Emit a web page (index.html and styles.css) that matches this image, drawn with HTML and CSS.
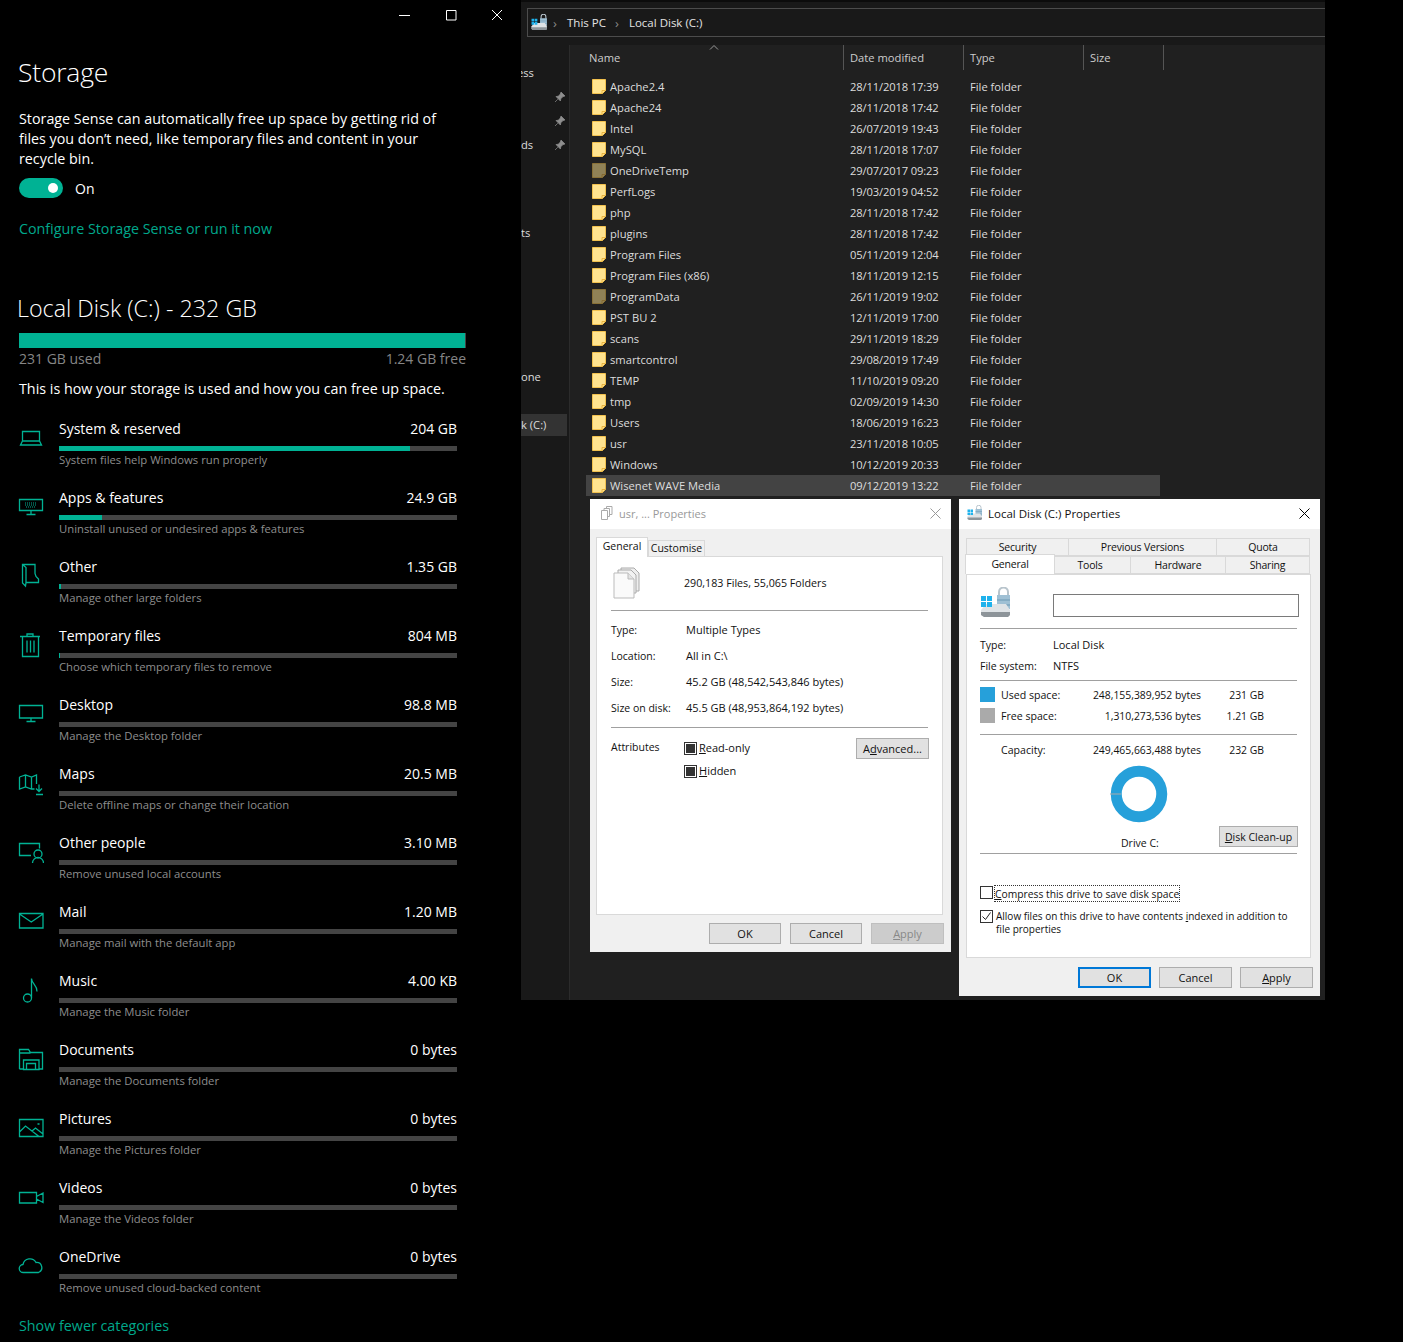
FILE: index.html
```html
<!DOCTYPE html>
<html lang="en">
<head>
<meta charset="utf-8">
<title>Storage</title>
<link rel="stylesheet" href="styles.css">
</head>
<body>
<svg class="defs" width="0" height="0">
  <symbol id="folder" viewBox="0 0 14 15"><path d="M.5.5h13v11l-3 3H.5z" fill="#ffe38f" stroke="#f2c14e"/><path d="M10 14.500v-3h3.500" fill="none" stroke="#e8b23e"/></symbol>
  <symbol id="drive" viewBox="0 0 32 32">
    <path d="M19 9V5a4.500 4.500 0 0 1 9 0v4" fill="none" stroke="#b8c4cc" stroke-width="2"/>
    <path d="M17 8h13v14H17z" fill="#9fc0d4"/>
    <path d="M17 13h13M17 18h13" stroke="#6d98b2"/>
    <path d="M1 23l5-6h20l4 6v5l-2 2H4l-3-2z" fill="#dfe3e6"/>
    <path d="M1 25h29v3l-2 2H4l-3-2z" fill="#8d9499"/>
    <path d="M1 9h5v5H1zM7 9h5v5H7zM1 15h5v5H1zM7 15h5v5H7z" fill="#1fb2ec"/>
  </symbol>
  <symbol id="pin" viewBox="0 0 12 12"><path d="M7 1l4 4-2 .6-2.200 2.200L6.400 10 2 5.600l2.200-.4L6.400 3zM3.800 8.200L1 11" fill="#8f8f8f" stroke="#8f8f8f" stroke-width=".7"/></symbol>
</svg>

<div class="desk">
  <main class="settings">
    <div class="caption">
      <svg class="cap-ico" width="46" height="30" viewBox="0 0 46 30"><path d="M17 15.500h11" stroke="#fff"/></svg>
      <svg class="cap-ico" width="46" height="30" viewBox="0 0 46 30"><path d="M18.500 10.500h9.500v9.500h-9.500z" fill="none" stroke="#fff"/></svg>
      <svg class="cap-ico" width="46" height="30" viewBox="0 0 46 30"><path d="M18 10l10 10M28 10L18 20" stroke="#fff" fill="none"/></svg>
    </div>
    <h1 class="page-title">Storage</h1>
    <p class="intro">Storage Sense can automatically free up space by getting rid of files you don’t need, like temporary files and content in your recycle bin.</p>
    <div class="toggle-row"><span class="toggle"><span class="knob"></span></span><span>On</span></div>
    <a class="link config">Configure Storage Sense or run it now</a>
    <h2 class="disk-title">Local Disk (C:) - 232 GB</h2>
    <div class="disk-bar"><div class="disk-fill"></div></div>
    <div class="disk-meta"><span>231 GB used</span><span>1.24 GB free</span></div>
    <p class="how">This is how your storage is used and how you can free up space.</p>

    <section class="cats">
      <div class="cat">
        <svg class="cat-ico" viewBox="0 0 26 26"><path d="M4.500 6.500h17V16h-17zM2.500 20l2-4h17l2 4z"/></svg>
        <div class="cat-body"><div class="cat-head"><span>System &amp; reserved</span><span>204 GB</span></div><div class="track"><div class="fill" style="width:351px"></div></div><div class="cat-sub">System files help Windows run properly</div></div>
      </div>
      <div class="cat">
        <svg class="cat-ico" viewBox="0 0 26 26"><path d="M1.500 5.500h23v11h-23zM13 16.500v3.500M8.500 20.500h9"/><path class="thin" d="M7 9h12M7 11h12M8 13h10" stroke-dasharray="1 1"/></svg>
        <div class="cat-body"><div class="cat-head"><span>Apps &amp; features</span><span>24.9 GB</span></div><div class="track"><div class="fill" style="width:43px"></div></div><div class="cat-sub">Uninstall unused or undesired apps &amp; features</div></div>
      </div>
      <div class="cat">
        <svg class="cat-ico" viewBox="0 0 26 26"><path d="M4.500 1.500h12.500v9l1 3 2.500 2.500v3.500H8l-.5 3.500-3-3zM4.500 1.500l3.500 3v15"/></svg>
        <div class="cat-body"><div class="cat-head"><span>Other</span><span>1.35 GB</span></div><div class="track"><div class="fill" style="width:2px"></div></div><div class="cat-sub">Manage other large folders</div></div>
      </div>
      <div class="cat">
        <svg class="cat-ico" viewBox="0 0 26 26"><path d="M2 4.500h20M9 4.500V2h6v2.500M4.500 5v19.500h16V5M9 8.500v12M12.500 8.500v12M16 8.500v12"/></svg>
        <div class="cat-body"><div class="cat-head"><span>Temporary files</span><span>804 MB</span></div><div class="track"><div class="fill" style="width:1px"></div></div><div class="cat-sub">Choose which temporary files to remove</div></div>
      </div>
      <div class="cat">
        <svg class="cat-ico" viewBox="0 0 26 26"><path d="M1.500 4.500h23v12.500h-23zM13 17v3M8.500 20.500h9"/></svg>
        <div class="cat-body"><div class="cat-head"><span>Desktop</span><span>98.8 MB</span></div><div class="track"></div><div class="cat-sub">Manage the Desktop folder</div></div>
      </div>
      <div class="cat">
        <svg class="cat-ico" viewBox="0 0 26 26"><path d="M1.500 7l6-2 6 2 5-2v9M1.500 7v12l6-2 6 2h3M7.500 5v12M13.500 7v12M21 14.500v7M18 18.500l3 3 3-3M18 24.500h7"/></svg>
        <div class="cat-body"><div class="cat-head"><span>Maps</span><span>20.5 MB</span></div><div class="track"></div><div class="cat-sub">Delete offline maps or change their location</div></div>
      </div>
      <div class="cat">
        <svg class="cat-ico" viewBox="0 0 26 26"><path d="M13 16.500H1.500v-12h20v5M16 15a4 4 0 1 0 8 0 4 4 0 0 0-8 0zM14.500 24a5.500 5.500 0 0 1 11 0"/></svg>
        <div class="cat-body"><div class="cat-head"><span>Other people</span><span>3.10 MB</span></div><div class="track"></div><div class="cat-sub">Remove unused local accounts</div></div>
      </div>
      <div class="cat">
        <svg class="cat-ico" viewBox="0 0 26 26"><path d="M1.500 5.500h23.500v14.500H1.500zM1.500 6l11.750 8L25 6"/></svg>
        <div class="cat-body"><div class="cat-head"><span>Mail</span><span>1.20 MB</span></div><div class="track"></div><div class="cat-sub">Manage mail with the default app</div></div>
      </div>
      <div class="cat">
        <svg class="cat-ico" viewBox="0 0 26 26"><path d="M13.500 1.500V21a4 4 0 1 1-8 0 4 4 0 0 1 8 0zM13.500 1.500c0 5 5.500 6 5.500 13"/></svg>
        <div class="cat-body"><div class="cat-head"><span>Music</span><span>4.00 KB</span></div><div class="track"></div><div class="cat-sub">Manage the Music folder</div></div>
      </div>
      <div class="cat">
        <svg class="cat-ico" viewBox="0 0 26 26"><path d="M1.500 23V3.500h9l2 3h12V23h-4M1.500 23h4M1.500 7h11M5.500 23.500V14h15.500v9.500zM8.500 23v-5.500h9V23"/></svg>
        <div class="cat-body"><div class="cat-head"><span>Documents</span><span>0 bytes</span></div><div class="track"></div><div class="cat-sub">Manage the Documents folder</div></div>
      </div>
      <div class="cat">
        <svg class="cat-ico" viewBox="0 0 26 26"><path d="M1.500 4.500h23.500v17H1.500zM1.500 17l6-6 13.500 10.500M14 16l3.500-3 7.500 6M19.500 9h2"/></svg>
        <div class="cat-body"><div class="cat-head"><span>Pictures</span><span>0 bytes</span></div><div class="track"></div><div class="cat-sub">Manage the Pictures folder</div></div>
      </div>
      <div class="cat">
        <svg class="cat-ico" viewBox="0 0 26 26"><path d="M1.500 8.500h17V19h-17zM18.500 12.500l6.500-3.500v9.500l-6.500-3.500"/></svg>
        <div class="cat-body"><div class="cat-head"><span>Videos</span><span>0 bytes</span></div><div class="track"></div><div class="cat-sub">Manage the Videos folder</div></div>
      </div>
      <div class="cat">
        <svg class="cat-ico" viewBox="0 0 26 26"><path d="M5.500 19.500a4 4 0 0 1-.5-8 7 7 0 0 1 13-2 5.200 5.200 0 0 1 2.500 10z"/></svg>
        <div class="cat-body"><div class="cat-head"><span>OneDrive</span><span>0 bytes</span></div><div class="track"></div><div class="cat-sub">Remove unused cloud-backed content</div></div>
      </div>
    </section>
    <a class="link fewer">Show fewer categories</a>
  </main>

  <div class="explorer">
    <div class="ex-top">
      <div class="address">
        <svg class="addr-ico" width="17" height="17"><use href="#drive"/></svg>
        <span class="crumb-sep">›</span><span>This PC</span><span class="crumb-sep gap">›</span><span>Local Disk (C:)</span>
      </div>
    </div>
    <div class="ex-body">
      <aside class="nav">
        <div class="nav-item n1">ess</div>
        <svg class="pin p1" width="12" height="12"><use href="#pin"/></svg>
        <svg class="pin p2" width="12" height="12"><use href="#pin"/></svg>
        <div class="nav-item n3">ds</div>
        <svg class="pin p3" width="12" height="12"><use href="#pin"/></svg>
        <div class="nav-item n4">ts</div>
        <div class="nav-item n5">one</div>
        <div class="nav-item n6">k (C:)</div>
      </aside>
      <section class="files">
        <div class="cols">
          <div class="col col-name">Name<svg class="sort" width="10" height="5" viewBox="0 0 10 5"><path d="M1 4.500l4-4 4 4" fill="none" stroke="#999"/></svg></div>
          <div class="col col-date">Date modified</div>
          <div class="col col-type">Type</div>
          <div class="col col-size">Size</div>
        </div>
        <div class="list">
          <div class="file"><span class="fname"><svg class="fi"><use href="#folder"/></svg>Apache2.4</span><span>28/11/2018 17:39</span><span>File folder</span></div>
          <div class="file"><span class="fname"><svg class="fi"><use href="#folder"/></svg>Apache24</span><span>28/11/2018 17:42</span><span>File folder</span></div>
          <div class="file"><span class="fname"><svg class="fi"><use href="#folder"/></svg>Intel</span><span>26/07/2019 19:43</span><span>File folder</span></div>
          <div class="file"><span class="fname"><svg class="fi"><use href="#folder"/></svg>MySQL</span><span>28/11/2018 17:07</span><span>File folder</span></div>
          <div class="file"><span class="fname"><svg class="fi dim"><use href="#folder"/></svg>OneDriveTemp</span><span>29/07/2017 09:23</span><span>File folder</span></div>
          <div class="file"><span class="fname"><svg class="fi"><use href="#folder"/></svg>PerfLogs</span><span>19/03/2019 04:52</span><span>File folder</span></div>
          <div class="file"><span class="fname"><svg class="fi"><use href="#folder"/></svg>php</span><span>28/11/2018 17:42</span><span>File folder</span></div>
          <div class="file"><span class="fname"><svg class="fi"><use href="#folder"/></svg>plugins</span><span>28/11/2018 17:42</span><span>File folder</span></div>
          <div class="file"><span class="fname"><svg class="fi"><use href="#folder"/></svg>Program Files</span><span>05/11/2019 12:04</span><span>File folder</span></div>
          <div class="file"><span class="fname"><svg class="fi"><use href="#folder"/></svg>Program Files (x86)</span><span>18/11/2019 12:15</span><span>File folder</span></div>
          <div class="file"><span class="fname"><svg class="fi dim"><use href="#folder"/></svg>ProgramData</span><span>26/11/2019 19:02</span><span>File folder</span></div>
          <div class="file"><span class="fname"><svg class="fi"><use href="#folder"/></svg>PST BU 2</span><span>12/11/2019 17:00</span><span>File folder</span></div>
          <div class="file"><span class="fname"><svg class="fi"><use href="#folder"/></svg>scans</span><span>29/11/2019 18:29</span><span>File folder</span></div>
          <div class="file"><span class="fname"><svg class="fi"><use href="#folder"/></svg>smartcontrol</span><span>29/08/2019 17:49</span><span>File folder</span></div>
          <div class="file"><span class="fname"><svg class="fi"><use href="#folder"/></svg>TEMP</span><span>11/10/2019 09:20</span><span>File folder</span></div>
          <div class="file"><span class="fname"><svg class="fi"><use href="#folder"/></svg>tmp</span><span>02/09/2019 14:30</span><span>File folder</span></div>
          <div class="file"><span class="fname"><svg class="fi"><use href="#folder"/></svg>Users</span><span>18/06/2019 16:23</span><span>File folder</span></div>
          <div class="file"><span class="fname"><svg class="fi"><use href="#folder"/></svg>usr</span><span>23/11/2018 10:05</span><span>File folder</span></div>
          <div class="file"><span class="fname"><svg class="fi"><use href="#folder"/></svg>Windows</span><span>10/12/2019 20:33</span><span>File folder</span></div>
          <div class="file selected"><span class="fname"><svg class="fi"><use href="#folder"/></svg>Wisenet WAVE Media</span><span>09/12/2019 13:22</span><span>File folder</span></div>
        </div>
      </section>
    </div>
  </div>

  <div class="dialog d1">
    <div class="dlg-title inactive">
      <svg class="doc-small" width="13" height="14" viewBox="0 0 13 14"><path d="M1.500 4.500h6v9h-6zM4 4V2.500h5.500v8H8M6.500 2V.5h5.500v8h-2" fill="#fff" stroke="#aaa"/></svg>
      <span>usr, ... Properties</span>
      <svg class="x" width="11" height="11" viewBox="0 0 11 11"><path d="M.5.500l10 10M10.500.500l-10 10" stroke="#999" fill="none"/></svg>
    </div>
    <div class="tabs1"><div class="tab active t-general">General</div><div class="tab t-custom">Customise</div></div>
    <div class="panel p-d1">
      <div class="d1-head">
        <svg class="docs" width="28" height="32" viewBox="0 0 28 32"><path d="M8 1h13l5 5v18H8z" fill="#eee" stroke="#aaa"/><path d="M5 3h13l5 5v18H5z" fill="#f2f2f2" stroke="#aaa"/><path d="M1 6h14l6 6v19H1z" fill="#fafafa" stroke="#bbb"/><path d="M15 6v6h6" fill="#e4e4e4" stroke="#bbb"/></svg>
        <span>290,183 Files, 55,065 Folders</span>
      </div>
      <dl class="d1-info">
        <dt>Type:</dt><dd>Multiple Types</dd>
        <dt>Location:</dt><dd>All in C:\</dd>
        <dt>Size:</dt><dd>45.2 GB (48,542,543,846 bytes)</dd>
        <dt>Size on disk:</dt><dd>45.5 GB (48,953,864,192 bytes)</dd>
      </dl>
      <div class="attrs">
        <div class="attr-label">Attributes</div>
        <div class="attr-checks">
          <label class="chk"><span class="box mixed"></span><span class="chk-text"><u>R</u>ead-only</span></label>
          <label class="chk"><span class="box mixed"></span><span class="chk-text"><u>H</u>idden</span></label>
        </div>
        <button class="btn adv">A<u>d</u>vanced...</button>
      </div>
    </div>
    <div class="dlg-foot foot1">
      <button class="btn">OK</button><button class="btn">Cancel</button><button class="btn disabled"><u>A</u>pply</button>
    </div>
  </div>

  <div class="dialog d2">
    <div class="dlg-title">
      <svg class="drive-small" width="16" height="16"><use href="#drive"/></svg>
      <span>Local Disk (C:) Properties</span>
      <svg class="x" width="11" height="11" viewBox="0 0 11 11"><path d="M.5.500l10 10M10.500.500l-10 10" stroke="#000" fill="none"/></svg>
    </div>
    <div class="tabs2">
      <div class="tabrow back"><div class="tab w102">Security</div><div class="tab w148">Previous Versions</div><div class="tab w93">Quota</div></div>
      <div class="tabrow front"><div class="tab active w89">General</div><div class="tab w76">Tools</div><div class="tab w95">Hardware</div><div class="tab w84">Sharing</div></div>
    </div>
    <div class="panel p-d2">
      <div class="d2-head">
        <svg class="drive-big" width="32" height="32"><use href="#drive"/></svg>
        <div class="namebox"></div>
      </div>
      <dl class="d2-info">
        <dt>Type:</dt><dd>Local Disk</dd>
        <dt>File system:</dt><dd>NTFS</dd>
      </dl>
      <div class="space s-top">
        <span class="swatch used"></span><span class="lbl">Used space:</span><span class="num">248,155,389,952 bytes</span><span class="num">231 GB</span>
        <span class="swatch free"></span><span class="lbl">Free space:</span><span class="num">1,310,273,536 bytes</span><span class="num">1.21 GB</span>
      </div>
      <div class="space s-cap">
        <span></span><span class="lbl">Capacity:</span><span class="num">249,465,663,488 bytes</span><span class="num">232 GB</span>
      </div>
      <svg class="ring" width="58" height="58" viewBox="0 0 58 58"><circle cx="29" cy="29" r="22.750" fill="none" stroke="#26a0da" stroke-width="11"/><path d="M0 29h11" stroke="#aaa"/></svg>
      <div class="drive-row"><span class="drive-label">Drive C:</span><button class="btn clean"><u>D</u>isk Clean-up</button></div>
      <label class="chk opt compress"><span class="box"></span><span class="focus"><u>C</u>ompress this drive to save disk space</span></label>
      <label class="chk opt index"><span class="box">
        <svg width="11" height="11" viewBox="0 0 11 11"><path d="M1.500 5.500l3 3 5-7" fill="none" stroke="#222"/></svg></span><span class="idx-text">Allow files on this drive to have contents <u>i</u>ndexed in addition to file properties</span></label>
    </div>
    <div class="dlg-foot foot2">
      <button class="btn primary">OK</button><button class="btn">Cancel</button><button class="btn"><u>A</u>pply</button>
    </div>
  </div>
</div>
</body>
</html>
```
FILE: styles.css
```css
* { box-sizing: border-box; }
html, body { margin: 0; padding: 0; background: #000; }
body { font-family: "Open Sans", "Noto Sans", sans-serif; }
.defs { position: absolute; }
.desk { position: relative; width: 1403px; height: 1342px; overflow: hidden; background: #000; }

/* Settings */
.settings { width: 520px; height: 1342px; padding-left: 19px; color: #fff; font-size: 14px; }
.caption { display: flex; justify-content: flex-end; height: 30px; }
.cap-ico { display: block; }
.page-title { margin: 22px 0 0 -1px; font-size: 26.500px; font-weight: 300; line-height: 40px; letter-spacing: -.2px; }
.intro { margin: 17px 0 0; width: 430px; line-height: 20px; font-size: 14.300px; }
.toggle-row { display: flex; align-items: center; gap: 12px; height: 20px; margin-top: 9px; }
.toggle { display: block; width: 44px; height: 20px; border-radius: 10px; background: #00b294; position: relative; }
.knob { position: absolute; left: 29px; top: 5px; width: 10px; height: 10px; border-radius: 50%; background: #fff; }
.link { display: block; color: #00a88c; line-height: 20px; font-size: 14.300px; }
.config { margin-top: 21px; }
.disk-title { margin: 49px 0 0 -2px; font-size: 23.300px; font-weight: 300; line-height: 40px; }
.disk-bar { width: 447px; height: 15px; margin-top: 5px; background: #444; }
.disk-fill { width: 446px; height: 15px; background: #00b294; }
.disk-meta { display: flex; justify-content: space-between; width: 447px; line-height: 20px; margin-top: 1px; color: #868686; }
.how { margin: 10px 0 0; line-height: 20px; font-size: 14.300px; }
.cats { margin-top: 20px; }
.cat { display: flex; height: 69px; align-items: flex-start; }
.cat-ico { width: 26px; height: 26px; flex: none; margin: 6px 15px 0 -1px; fill: none; stroke: #00b294; stroke-width: 1.300; }
.cat-ico .thin { stroke-width: 1; }
.cat-body { width: 398px; }
.cat-head { display: flex; justify-content: space-between; line-height: 20px; }
.track { height: 5px; margin-top: 7px; background: #444; }
.fill { height: 5px; background: #00b294; }
.cat-sub { font-size: 11.300px; line-height: 18px; color: #8e8e8e; }
.fewer { margin-top: 0; }

/* Explorer */
.explorer { position: absolute; left: 521px; top: 0; width: 804px; height: 1000px; background: #191919; color: #ddd; font-size: 11.200px; }
.ex-top { height: 45px; padding: 8px 0 0 6px; border-top: 2px solid #0c0c0c; }
.address { display: flex; align-items: center; height: 29px; margin-top: -2px; border: 1px solid #4c4c4c; border-right: 0; padding-left: 3px; color: #e4e4e4; font-size: 11.500px; }
.addr-ico { margin-right: 5px; }
.crumb-sep { color: #888; width: 14px; font-size: 13px; text-align: left; }
.crumb-sep.gap { margin-left: 9px; }
.ex-body { display: flex; height: 955px; }
.nav { position: relative; width: 48px; flex: none; background: #191919; overflow: hidden; }
.nav-item { position: absolute; left: 0; height: 22px; line-height: 22px; width: 46px; color: #ddd; }
.n1 { top: 17px; text-indent: -4px; }
.n3 { top: 89px; }
.n4 { top: 177px; }
.n5 { top: 321px; }
.n6 { top: 369px; background: #333; }
.pin { position: absolute; left: 33px; }
.p1 { top: 46px; }
.p2 { top: 70px; }
.p3 { top: 94px; }
.files { flex: 1; background: #202020; border-left: 1px solid #2b2b2b; }
.cols { position: relative; display: flex; height: 25px; }
.col { height: 25px; line-height: 25px; border-right: 1px solid #555; color: #ccc; padding-left: 6px; }
.col-name { width: 274px; padding-left: 19px; }
.col-date { width: 120px; }
.col-type { width: 120px; }
.col-size { width: 80px; }
.sort { position: absolute; left: 139px; top: 0; }
.list { margin: 6px 0 0 16px; width: 574px; }
.file { display: grid; grid-template-columns: 264px 120px 1fr; height: 21px; line-height: 21px; color: #ddd; }
.file span:nth-child(2) { letter-spacing: -.15px; }
.file.selected { background: #434343; }
.fname { display: flex; align-items: center; padding-left: 6px; }
.fi { width: 14px; height: 15px; margin-right: 4px; flex: none; }
.fi.dim { opacity: .5; }

/* Dialogs */
.dialog { position: absolute; top: 499px; background: #f0f0f0; color: #111; font-size: 11px; }
.dialog button { font-family: inherit; }
.d1 { left: 590px; width: 361px; height: 453px; }
.d2 { left: 959px; width: 361px; height: 497px; }
.dlg-title { display: flex; align-items: center; height: 30px; padding: 0 10px 2px 8px; background: #fff; font-size: 11.500px; }
.dlg-title .x { margin-left: auto; }
.dlg-title.inactive { color: #999; padding-left: 10px; font-size: 11px; }
.doc-small { margin-right: 6px; }
.drive-small { margin-right: 5px; }
.tabs1 { display: flex; align-items: flex-end; height: 19px; margin: 9px 0 0 6px; }
.tab { display: flex; align-items: center; justify-content: center; border: 1px solid #d9d9d9; height: 17px; background: #f0f0f0; font-size: 10.500px; padding-bottom: 1px; }
.tab.active { background: #fff; border-bottom: 0; height: 20px; position: relative; z-index: 1; padding-bottom: 3px; }
.t-general { width: 52px; }
.t-custom { width: 57px; }
.panel { position: relative; background: #fff; border: 1px solid #d9d9d9; margin-top: -1px; }
.p-d1 { width: 347px; height: 359px; margin-left: 6px; padding: 0 14px; }
.d1-head { display: flex; align-items: center; height: 54px; padding-bottom: 2px; border-bottom: 1px solid #a0a0a0; font-size: 10.700px; }
.docs { width: 28px; margin: 0 43px 0 2px; flex: none; }
.d1-info { display: grid; grid-template-columns: 75px 1fr; grid-auto-rows: 26px; align-items: center; margin: 5px 0 0; padding-bottom: 7px; border-bottom: 1px solid #a0a0a0; }
dt, dd { margin: 0; }
dt { font-size: 10.500px; }
.d1-info dt { padding-top: 1px; }
.attrs { display: flex; padding-top: 10px; }
.attr-label { width: 73px; line-height: 18px; font-size: 10.500px; }
.attr-checks { display: flex; flex-direction: column; gap: 10px; padding-top: 4px; flex: 1; }
.chk { display: flex; align-items: center; gap: 2px; line-height: 13px; }
.chk-text { margin-top: -2px; }
.box { display: flex; align-items: center; justify-content: center; width: 13px; height: 13px; border: 1px solid #333; background: #fff; flex: none; }
.box.mixed::after { content: ""; width: 9px; height: 9px; background: #333; }
.btn { display: block; width: 72px; height: 21px; padding: 0; background: #e1e1e1; border: 1px solid #adadad; font-size: 11px; color: #111; }
.btn.disabled { background: #ccc; border-color: #bfbfbf; color: #888; }
.btn.primary { border: 2px solid #0078d7; }
.adv { width: 73px; margin-right: -1px; }
.dlg-foot { display: flex; justify-content: flex-end; padding-right: 7px; }
.foot1 { padding-top: 8px; gap: 9px; }
.foot1 .btn { width: 72px; }
.foot1 .btn:last-child { width: 73px; }
.tabs2 { margin: 9px 0 0 8px; }
.tabrow { display: flex; height: 18px; align-items: flex-end; }
.tabrow .tab { height: 18px; margin-left: -1px; letter-spacing: -.2px; padding-bottom: 0; }
.tabrow.front { margin-left: -1px; }
.tabrow.front .tab.active { height: 20px; padding-bottom: 2px; }
.w102 { width: 103px; }
.w148 { width: 149px; }
.w93 { width: 94px; }
.w89 { width: 90px; }
.w76 { width: 77px; padding-right: 5px; }
.w95 { width: 96px; }
.w84 { width: 85px; }
.p-d2 { width: 345px; height: 384px; margin-left: 7px; margin-top: 0; padding: 0 13px; }
.d2-head { display: flex; height: 54px; padding-top: 19px; border-bottom: 1px solid #a0a0a0; position: relative; }
.drive-big { position: absolute; left: 0; top: 12px; }
.namebox { width: 246px; height: 23px; margin-left: 73px; border: 1px solid #7a7a7a; flex: none; }
.d2-info { display: grid; grid-template-columns: 73px 1fr; grid-auto-rows: 21px; align-items: center; margin: 5px 0 0; padding-bottom: 4px; border-bottom: 1px solid #a0a0a0; }
.space { display: grid; grid-template-columns: 21px 60px 140px 63px; grid-auto-rows: 21px; align-items: center; }
.s-top { padding: 3px 0 8px; border-bottom: 1px solid #a0a0a0; }
.s-cap { padding-top: 4px; }
.lbl { white-space: nowrap; font-size: 10.600px; }
.num { text-align: right; white-space: nowrap; font-size: 10.400px; }
.swatch { width: 15px; height: 15px; }
.swatch.used { background: #26a0da; }
.swatch.free { background: #aaa; }
.ring { display: block; margin: 5px 0 0 130px; }
.drive-row { display: flex; align-items: flex-start; height: 32px; padding-top: 4px; margin-top: -1px; border-bottom: 1px solid #a0a0a0; }
.drive-label { margin: 8px 0 0 141px; line-height: 18px; font-size: 10.500px; }
.clean { width: 79px; margin: 0 -1px 0 auto; font-size: 10.500px; padding-top: 1px; }
.opt { align-items: flex-start; }
.compress { margin-top: 32px; line-height: 14px; font-size: 10.300px; }
.focus { padding-top: 1px; outline: 1px dotted #333; outline-offset: 0; }
.index { margin-top: 9px; line-height: 13px; font-size: 10px; }
.idx-text { width: 300px; margin-left: 1px; padding-top: 0; }
.foot2 { padding-top: 9px; gap: 8px; }
.foot2 .btn { width: 73px; }
```
